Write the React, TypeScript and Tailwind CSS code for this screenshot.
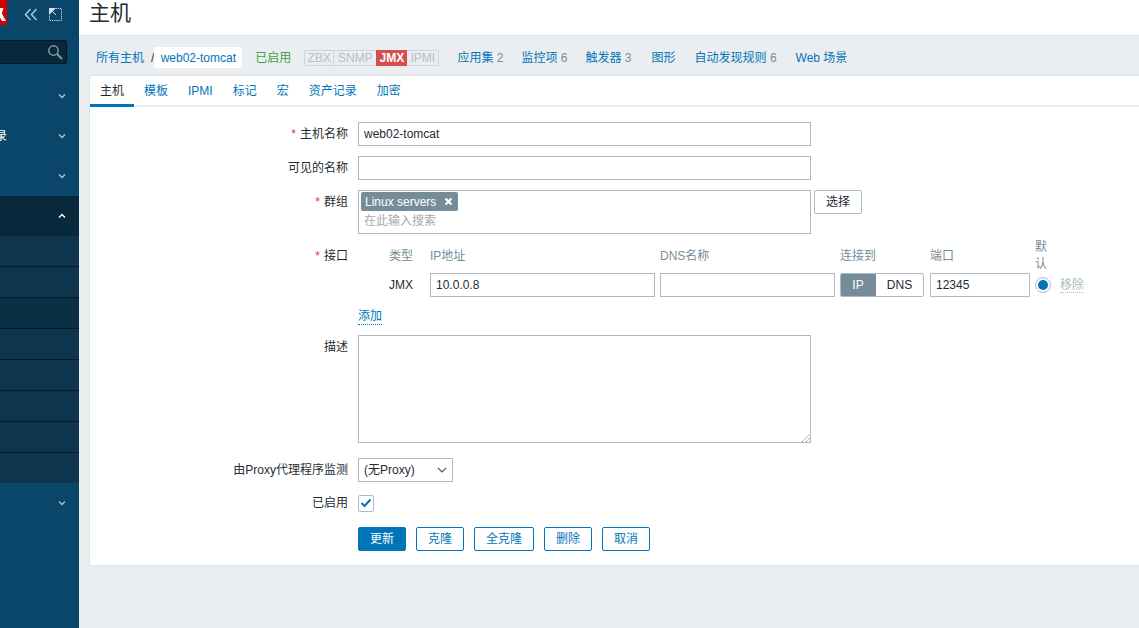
import React from "react";

const font = { fontFamily: '"Liberation Sans", "Noto Sans CJK SC", sans-serif' };

function Chev({ up = false }: { up?: boolean }) {
  return (
    <svg width="8" height="6" viewBox="0 0 8 6" className={up ? "text-white" : "text-[#a9c3d3]"}>
      <path d={up ? "M1 4.5 L4 1.5 L7 4.5" : "M1 1.5 L4 4.5 L7 1.5"} fill="none" stroke="currentColor" strokeWidth="1.4" />
    </svg>
  );
}

function MenuRow({ up = false, dark = false, text }: { up?: boolean; dark?: boolean; text?: string }) {
  return (
    <div className={`h-[40px] flex items-center justify-between pr-[13px] ${dark ? "bg-[#08283b]" : ""}`}>
      <span className="text-[12px] text-white -ml-[41px] whitespace-nowrap">{text}</span>
      <Chev up={up} />
    </div>
  );
}

function Sidebar() {
  const subs = [false, false, true, false, false, false, false, false];
  return (
    <aside className="w-[79px] shrink-0 bg-[#0a466a] overflow-hidden">
      <div className="h-[40px] flex items-start">
        <div className="w-[7px] h-[25px] bg-[#d40000] overflow-hidden shrink-0">
          <svg width="7" height="25" viewBox="0 0 7 25" className="block">
            <path d="M0 8 H3.5 L1.8 13.5 L6 21 H2 L0 17.5 Z" fill="#fff" />
          </svg>
        </div>
        <svg width="14" height="13" viewBox="0 0 14 13" className="ml-[17px] mt-[8px] text-[#a9c3d3]">
          <path d="M6.5 1 L1.5 6.5 L6.5 12 M12.5 1 L7.5 6.5 L12.5 12" fill="none" stroke="currentColor" strokeWidth="1.6" />
        </svg>
        <svg width="13" height="13" viewBox="0 0 13 13" className="ml-[11px] mt-[8px] text-[#d5e2ea]">
          <path d="M6.5 .5 H12.5 V12.5 H.5 V6.5" fill="none" stroke="currentColor" strokeDasharray="1.2 1" />
          <path d="M.5 .5 H6 L.5 6 Z M3 3 L7 7" fill="currentColor" stroke="currentColor" />
        </svg>
      </div>
      <div className="w-[67px] h-[24px] bg-[#08283b] rounded-r-[3px] border border-l-0 border-[#04151f] flex items-center justify-end pr-[3px]">
        <svg width="16" height="16" viewBox="0 0 16 16" className="text-[#7e9cad]">
          <circle cx="6.5" cy="6.5" r="4.7" fill="none" stroke="currentColor" strokeWidth="1.5" />
          <path d="M10 10 L15 15" stroke="currentColor" strokeWidth="2" />
        </svg>
      </div>
      <div className="mt-[12px]">
        <MenuRow />
        <MenuRow text="资产记录" />
        <MenuRow />
        <MenuRow up dark />
        <div className="flex flex-col">
          {subs.map((s, i) => (
            <div key={i} className={`${i < 7 ? "h-[31px] border-b border-[#051b29]" : "h-[30px]"} ${s ? "bg-[#0a2e44]" : "bg-[#0e344e]"}`} />
          ))}
        </div>
        <MenuRow />
      </div>
    </aside>
  );
}

function NavLink({ t, n, cls = "" }: { t: string; n?: number; cls?: string }) {
  return (
    <span className={`text-[#0275b8] whitespace-nowrap ${cls}`}>
      {t}
      {n !== undefined && <span className="text-[#768d99]"> {n}</span>}
    </span>
  );
}

function Breadcrumbs() {
  return (
    <div className="h-[39px] flex items-center text-[12px] pl-[7px] pt-[4px]">
      <span className="text-[#0275b8]">所有主机</span>
      <span className="text-[#1f2c33] ml-[7px]">/</span>
      <span className="h-[21px] w-[88px] bg-white rounded-[2px] flex items-center justify-center text-[#0275b8] shadow-[0_0_1px_#dfe4e7]">web02-tomcat</span>
      <span className="text-[#429e47] ml-[13px]">已启用</span>
      <span className="ml-[13px] h-[16px] flex border border-[#ccd5d9] rounded-[2px] text-[#b4c0c6] leading-[14px] text-[12px]">
        <span className="w-[29px] text-center border-r border-[#ccd5d9]">ZBX</span>
        <span className="w-[42px] text-center">SNMP</span>
        <span className="w-[31px] text-center bg-[#d64e4e] text-white font-bold -my-px leading-[16px]">JMX</span>
        <span className="w-[31px] text-center">IPMI</span>
      </span>
      <div className="ml-[18px] flex items-center">
        <NavLink t="应用集" n={2} />
        <NavLink t="监控项" n={6} cls="ml-[18px]" />
        <NavLink t="触发器" n={3} cls="ml-[18px]" />
        <NavLink t="图形" cls="ml-[20px]" />
        <NavLink t="自动发现规则" n={6} cls="ml-[19px]" />
        <NavLink t="Web 场景" cls="ml-[19px]" />
      </div>
    </div>
  );
}

function Tabs() {
  const items = ["主机", "模板", "IPMI", "标记", "宏", "资产记录", "加密"];
  return (
    <div className="flex h-[31px] border-b-2 border-[#ebeef0] text-[12px]">
      {items.map((t, i) => (
        <div
          key={t}
          className={`h-[31px] px-[10px] pt-[2px] flex items-center border-b-[3px] ${
            i === 0 ? "border-[#0275b8] text-[#1f2c33]" : "border-transparent text-[#0275b8]"
          }`}
        >
          {t}
        </div>
      ))}
    </div>
  );
}

function Label({ t, req = false }: { t: string; req?: boolean }) {
  return (
    <div className="w-[268px] shrink-0 text-right pr-[10px] text-[12px] text-[#1f2c33] whitespace-nowrap">
      {req && <span className="text-[#e33734] mr-[4px]">*</span>}
      {t}
    </div>
  );
}

function TextBox({ v, w }: { v?: string; w: string }) {
  return (
    <div className={`h-[24px] ${w} border border-[#acbbc2] bg-white px-[5px] flex items-center text-[12px] text-[#1f2c33]`}>{v}</div>
  );
}

function Btn({ t, w, primary = false }: { t: string; w: string; primary?: boolean }) {
  return (
    <div
      className={`h-[24px] ${w} rounded-[2px] border flex items-center justify-center text-[12px] ${
        primary ? "bg-[#0275b8] border-[#0275b8] text-white" : "bg-white border-[#0275b8] text-[#0275b8]"
      }`}
    >
      {t}
    </div>
  );
}

function Form() {
  return (
    <div className="pt-[15px] pb-[14px] flex flex-col">
      <div className="flex items-center h-[24px]">
        <Label t="主机名称" req />
        <TextBox v="web02-tomcat" w="w-[453px]" />
      </div>
      <div className="flex items-center h-[24px] mt-[10px]">
        <Label t="可见的名称" />
        <TextBox w="w-[453px]" />
      </div>
      <div className="flex mt-[10px]">
        <div className="pt-[3px]"><Label t="群组" req /></div>
        <div className="w-[453px] h-[44px] border border-[#acbbc2] px-[2px] pt-[1px]">
          <div className="flex w-[97px] h-[19px] bg-[#768d99] text-white rounded-[2px] items-center text-[12px] pl-[4px]">
            Linux servers
            <svg width="9" height="9" viewBox="0 0 9 9" className="ml-[8px]">
              <path d="M1.5 1.5 L7.5 7.5 M7.5 1.5 L1.5 7.5" stroke="#fff" strokeWidth="2.2" />
            </svg>
          </div>
          <div className="text-[12px] text-[#a9a9a9] pl-[3px] mt-[1px] leading-[18px]">在此输入搜索</div>
        </div>
        <div className="ml-[3px] h-[24px] w-[48px] rounded-[2px] border border-[#acbbc2] flex items-center justify-center text-[12px] text-[#1f2c33]">选择</div>
      </div>
      <div className="flex mt-[5px]">
        <div className="pt-[8px]"><Label t="接口" req /></div>
        <div className="grid grid-cols-[72px_230px_180px_90px_105px_25px_auto] items-center text-[12px]">
          <div className="h-[34px] pl-[31px] flex items-center text-[#768d99]">类型</div>
          <div className="text-[#768d99]">IP地址</div>
          <div className="text-[#768d99]">DNS名称</div>
          <div className="text-[#768d99]">连接到</div>
          <div className="text-[#768d99]">端口</div>
          <div className="text-[#768d99] w-[14px] leading-[17px]">默认</div>
          <div />
          <div className="pl-[31px] text-[#1f2c33]">JMX</div>
          <TextBox v="10.0.0.8" w="w-[225px]" />
          <TextBox w="w-[175px]" />
          <div className="flex h-[24px] w-[84px] rounded-[2px] border border-[#acbbc2] overflow-hidden">
            <div className="w-[36px] -m-px mr-0 bg-[#768d99] text-white flex items-center justify-center">IP</div>
            <div className="flex-1 flex items-center justify-center text-[#1f2c33]">DNS</div>
          </div>
          <TextBox v="12345" w="w-[100px]" />
          <div className="w-[16px] h-[16px] rounded-full border border-[#acbbc2] flex items-center justify-center">
            <div className="w-[10px] h-[10px] rounded-full bg-[#0275b8]" />
          </div>
          <div className="text-[#acbbc2] border-b border-dotted border-[#acbbc2] leading-[14px] w-fit">移除</div>
        </div>
      </div>
      <div className="flex mt-[12px] h-[16px]">
        <Label t="" />
        <span className="text-[12px] text-[#0275b8] border-b border-dotted border-[#0275b8] leading-[15px]">添加</span>
      </div>
      <div className="flex mt-[10px]">
        <div className="pt-[3px]"><Label t="描述" /></div>
        <div className="w-[453px] h-[108px] border border-[#acbbc2] relative">
          <svg width="8" height="8" viewBox="0 0 8 8" className="absolute right-0 bottom-0 text-[#768d99]">
            <path d="M0 8 L8 0 M4 8 L8 4" stroke="currentColor" strokeDasharray="1.4 .8" />
          </svg>
        </div>
      </div>
      <div className="flex items-center mt-[15px]">
        <Label t="由Proxy代理程序监测" />
        <div className="w-[95px] h-[24px] border border-[#acbbc2] flex items-center justify-between px-[5px] text-[12px] text-[#1f2c33]">
          (无Proxy)
          <svg width="10" height="6" viewBox="0 0 10 6"><path d="M1 1 L5 5 L9 1" fill="none" stroke="#45555e" strokeWidth="1.1" /></svg>
        </div>
      </div>
      <div className="flex items-center mt-[12px]">
        <Label t="已启用" />
        <div className="w-[16px] h-[17px] border border-[#acbbc2] rounded-[2px] flex items-center justify-center">
          <svg width="12" height="10" viewBox="0 0 12 10"><path d="M1.5 5 L4.5 8 L10.5 1.5" fill="none" stroke="#0275b8" strokeWidth="2" /></svg>
        </div>
      </div>
      <div className="flex mt-[15px]">
        <Label t="" />
        <div className="flex gap-[10px]">
          <Btn t="更新" w="w-[48px]" primary />
          <Btn t="克隆" w="w-[48px]" />
          <Btn t="全克隆" w="w-[60px]" />
          <Btn t="删除" w="w-[48px]" />
          <Btn t="取消" w="w-[48px]" />
        </div>
      </div>
    </div>
  );
}

export default function App() {
  return (
    <div className="flex h-screen overflow-hidden bg-[#ebeef0]" style={font}>
      <Sidebar />
      <main className="flex-1 min-w-0 flex flex-col">
        <header className="h-[36px] shrink-0 bg-white border-b border-[#dfe4e7] pl-[10px] pt-[1px]">
          <h1 className="text-[21px] leading-[24px] text-[#1f2c33]">主机</h1>
        </header>
        <div className="pl-[10px]">
          <Breadcrumbs />
          <section className="bg-white border border-[#dfe4e7] border-r-0">
            <Tabs />
            <Form />
          </section>
        </div>
      </main>
    </div>
  );
}
